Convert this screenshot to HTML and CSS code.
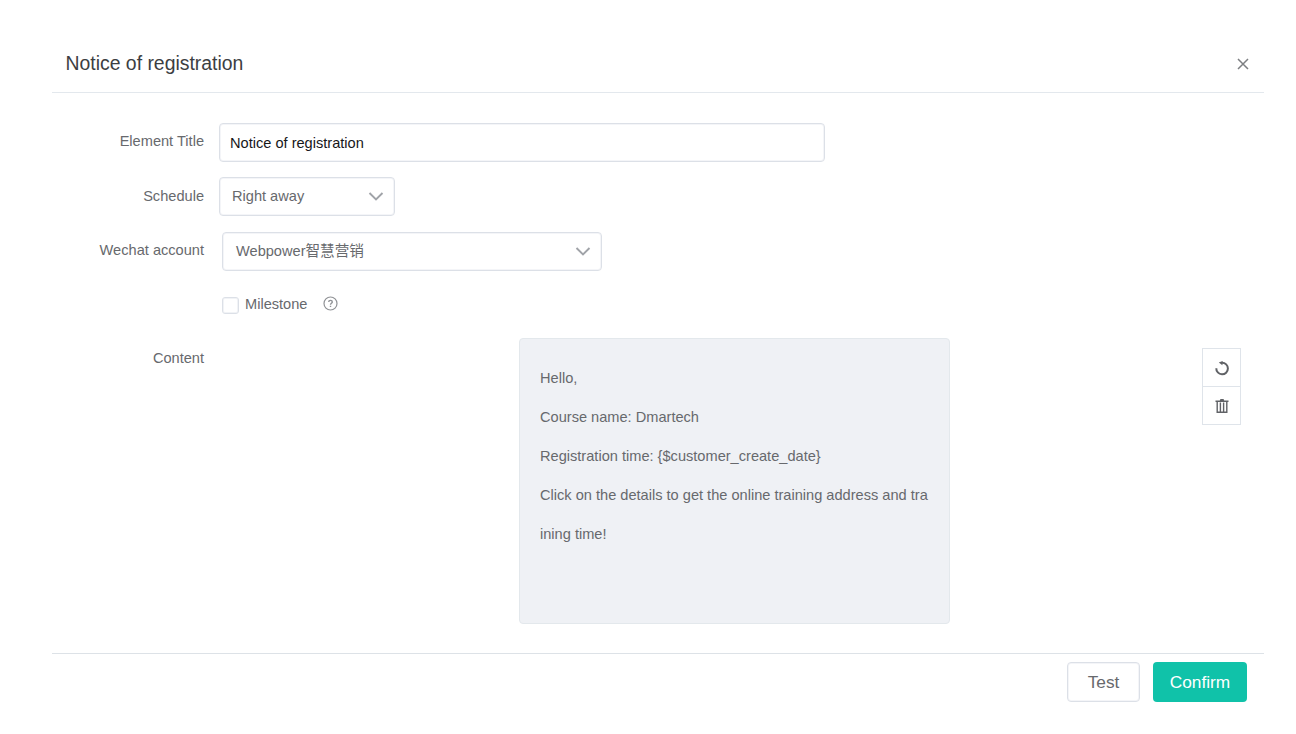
FILE: index.html
```html
<!DOCTYPE html>
<html lang="en">
<head>
<meta charset="utf-8">
<title>Notice of registration</title>
<link rel="stylesheet" href="styles.css">
</head>
<body>
<section class="dialog">
  <header class="dialog-header">
    <h1 class="dialog-title">Notice of registration</h1>
    <svg class="close" width="12" height="12" viewBox="0 0 12 12"><path d="M1 1L11 11M11 1L1 11"/></svg>
  </header>
  <main class="form">
    <div class="row row-title">
      <span class="label">Element Title</span>
      <div class="field field-title"><span class="field-text">Notice of registration</span></div>
    </div>
    <div class="row row-schedule">
      <span class="label">Schedule</span>
      <div class="field field-schedule"><span class="schedule-text">Right away</span>
        <svg class="chevron" width="16" height="10" viewBox="0 0 16 10"><path d="M1.5 1L8 7.5L14.5 1"/></svg>
      </div>
    </div>
    <div class="row row-account">
      <span class="label label-account">Wechat account</span>
      <div class="field field-account"><span class="account-text">Webpower智慧营销</span>
        <svg class="chevron" width="16" height="10" viewBox="0 0 16 10"><path d="M1.5 1L8 7.5L14.5 1"/></svg>
      </div>
    </div>
    <div class="row row-milestone">
      <span class="checkbox"></span>
      <span class="milestone-text">Milestone</span>
      <svg class="help" width="15" height="15" viewBox="0 0 15 15"><circle cx="7.5" cy="7.5" r="6.5"/><path class="question" d="M5.7 6C5.7 3.8 9.3 3.9 9.3 5.9C9.3 7.3 7.5 7.2 7.5 8.7M7.5 9.8V11"/></svg>
    </div>
    <div class="row row-content">
      <span class="label label-content">Content</span>
      <div class="message">
        <p class="line">Hello,</p>
        <p class="line">Course name: Dmartech</p>
        <p class="line">Registration time: {$customer_create_date}</p>
        <p class="line line-long">Click on the details to get the online training address and tra<br>ining time!</p>
      </div>
      <div class="tools">
        <div class="tool"><svg width="16" height="16" viewBox="0 0 16 16"><path class="undo-arc" d="M8 2.7A5.8 5.8 0 1 1 2.3 8.2"/><path class="solid" d="M4.8 2.6L8.6 .9L8.4 5.2Z"/></svg></div>
        <div class="tool"><svg width="16" height="16" viewBox="0 0 16 16"><path class="bin" d="M1.5 3.2H14.5M3.2 3.5V14.3H12.8V3.5M6.4 4.5V13.5M9.6 4.5V13.5"/><path class="solid" d="M5.8 3L6.4 1H9.6L10.2 3Z"/></svg></div>
      </div>
    </div>
  </main>
  <footer class="dialog-footer">
    <button class="button button-test">Test</button>
    <button class="button button-confirm">Confirm</button>
  </footer>
</section>
</body>
</html>
```
FILE: styles.css
```css
* { box-sizing: border-box; }
body {
  margin: 0;
  background: #fff;
  color: #67696d;
  font-family: "Liberation Sans", "Noto Sans CJK SC", sans-serif;
  font-size: 14.6px;
}
.dialog { width: 1212px; margin-left: 52px; padding-top: 34px; }
.dialog-header {
  display: flex;
  justify-content: space-between;
  align-items: center;
  height: 59px;
  padding: 0 15px 0 13.5px;
  border-bottom: 1px solid #e3e8ed;
}
.dialog-title { margin: 0; font-size: 19.4px; font-weight: 400; line-height: 24px; color: #3c3e42; }
.close { margin-top: 2px; fill: none; stroke: #7d7f82; stroke-width: 1.5; }
.form { height: 560px; padding-top: 30px; }
.row { display: flex; align-items: flex-start; }
.label { width: 152px; padding-top: 8px; margin-right: 15px; text-align: right; line-height: 20px; white-space: nowrap; }
.field {
  display: flex;
  align-items: center;
  justify-content: space-between;
  height: 39px;
  border: 1px solid #dce0e7;
  border-radius: 4px;
  box-shadow: inset 0 0 0 1px #f4f5f8;
  line-height: 20px;
}
.row-title { height: 54px; }
.field-title { width: 606px; padding-left: 10px; color: #16171a; }
.row-schedule { height: 55px; }
.row-schedule .label { padding-top: 9px; }
.field-schedule { width: 176px; padding: 0 10px 0 12px; }
.schedule-text, .account-text { margin-top: -2px; }
.row-account { height: 55px; }
.field-account { width: 380px; margin-left: 3px; padding: 0 10px 0 13px; }
.chevron { fill: none; stroke: #a0a3a8; stroke-width: 1.9; }
.row-milestone { height: 51px; padding: 7px 0 0 170px; }
.checkbox { width: 17px; height: 17px; margin-top: 3px; border: 1px solid #dce0e7; border-radius: 3px; box-shadow: inset 0 0 0 1px #f1f3f6; }
.milestone-text { margin-left: 6px; line-height: 20px; }
.help { margin: 2px 0 0 16px; fill: none; stroke: #909296; stroke-width: 1.2; }
.question { stroke-width: 1.4; }
.row-content .label { padding-top: 10px; }
.message {
  width: 431px;
  height: 286px;
  margin-left: 300px;
  padding: 20px;
  background: #eff1f5;
  border: 1px solid #e3e8ec;
  border-radius: 4px;
}
.line { margin: 0; line-height: 39px; white-space: nowrap; }
.tools { width: 39px; margin: 10px 0 0 252px; border: 1px solid #dfe4ea; }
.tool { display: flex; align-items: center; justify-content: center; height: 37px; }
.tool + .tool { height: 38px; border-top: 1px solid #dfe4ea; }
.undo-arc { fill: none; stroke: #606266; stroke-width: 2; }
.bin { fill: none; stroke: #606266; stroke-width: 1.4; }
.solid { fill: #606266; }
.dialog-footer { display: flex; justify-content: flex-end; gap: 13px; padding: 8px 17px 0 0; border-top: 1px solid #dde2e7; }
.button { height: 40px; padding: 0; border-radius: 4px; font: 17.3px "Liberation Sans", sans-serif; }
.button-test { width: 73px; background: #fff; border: 1px solid #dce0e7; box-shadow: inset 0 0 0 1px #f4f5f8; color: #67696d; }
.button-confirm { width: 94px; background: #10c2a9; border: 0; color: #fff; }
```
